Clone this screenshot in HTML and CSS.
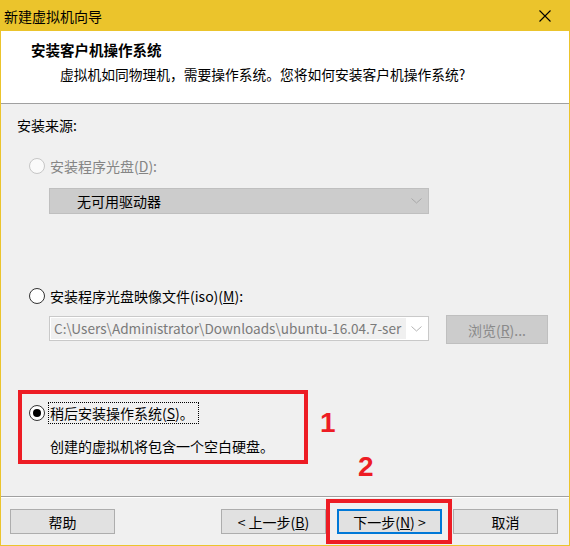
FILE: index.html
```html
<!DOCTYPE html>
<html lang="zh-CN">
<head>
<meta charset="utf-8">
<title>新建虚拟机向导</title>
<link rel="stylesheet" href="styles.css">
</head>
<body>
<div class="window">
  <div class="titlebar">
    <span class="title">新建虚拟机向导</span>
    <svg class="close" width="12" height="12" viewBox="0 0 12 12"><path d="M0.5 0.5 L11.5 11.5 M11.5 0.5 L0.5 11.5" stroke="#000" stroke-width="1.1" fill="none"/></svg>
  </div>
  <div class="header">
    <div class="h-title">安装客户机操作系统</div>
    <div class="h-sub">虚拟机如同物理机，需要操作系统。您将如何安装客户机操作系统?</div>
  </div>
  <div class="content">
    <div class="label">安装来源:</div>
    <div class="radio-row disabled r1">
      <span class="radio"></span>
      <span>安装程序光盘(<u>D</u>):</span>
    </div>
    <div class="select-disabled">
      <span>无可用驱动器</span>
      <svg class="chev" width="11" height="6" viewBox="0 0 11 6"><path d="M0.5 0.5 L5.5 5 L10.5 0.5" stroke="#a8a8a8" fill="none"/></svg>
    </div>
    <div class="radio-row r2">
      <span class="radio"></span>
      <span>安装程序光盘映像文件(iso)(<u>M</u>):</span>
    </div>
    <div class="iso-row">
      <div class="combo">
        <span class="combo-text">C:\Users\Administrator\Downloads\ubuntu-16.04.7-ser</span>
        <svg class="chev" width="11" height="6" viewBox="0 0 11 6"><path d="M0.5 0.5 L5.5 5 L10.5 0.5" stroke="#b4b4b4" fill="none"/></svg>
      </div>
      <div class="btn-disabled">浏览(<u>R</u>)...</div>
    </div>
    <div class="radio-row r3">
      <span class="radio checked"></span>
      <span class="focus">稍后安装操作系统(<u>S</u>)。</span>
    </div>
    <div class="desc">创建的虚拟机将包含一个空白硬盘。</div>
  </div>
  <div class="footer">
    <div class="btn">帮助</div>
    <div class="btn-group">
      <div class="btn">&lt; 上一步(<u>B</u>)</div>
      <div class="btn primary">下一步(<u>N</u>) &gt;</div>
      <div class="btn">取消</div>
    </div>
  </div>
  <div class="mark box1"></div>
  <div class="mark box2"></div>
  <div class="num n1">1</div>
  <div class="num n2">2</div>
</div>
</body>
</html>
```
FILE: styles.css
```css
* { box-sizing: border-box; }
html, body { margin: 0; padding: 0; }
body {
  font-family: "Noto Sans CJK SC", "Noto Sans", sans-serif;
  font-size: 14px;
  line-height: 20px;
  color: #000;
}
.window {
  position: relative;
  width: 570px;
  height: 546px;
  background: #ebc42c;
  padding: 0 1px 1px 1px;
  display: flex;
  flex-direction: column;
}
.titlebar {
  height: 31px;
  flex: none;
  display: flex;
  align-items: center;
  justify-content: space-between;
  padding: 0 18px 0 3px;
}
.title { font-size: 14px; }
.header {
  height: 73px;
  flex: none;
  background: #fff;
  border-bottom: 1px solid #a0a0a0;
  padding: 9px 0 0 30px;
}
.h-title { font-weight: bold; font-size: 14.5px; }
.h-sub { margin-top: 4px; padding-left: 29px; font-size: 13.75px; }
.content {
  height: 392px;
  flex: none;
  background: #f0f0f0;
  padding: 11px 0 0 16px;
}
.radio-row {
  display: flex;
  align-items: center;
  padding-left: 12px;
  height: 20px;
}
.radio {
  width: 16px;
  height: 16px;
  border: 1px solid #333;
  border-radius: 50%;
  background: #fff;
  margin-right: 5px;
  position: relative;
  flex: none;
}
.radio.checked::after {
  content: "";
  position: absolute;
  left: 3px;
  top: 3px;
  width: 8px;
  height: 8px;
  border-radius: 50%;
  background: #000;
}
.disabled { color: #858585; }
.disabled .radio { border-color: #c6c6c6; background: #fafafa; }
.r1 { margin-top: 21px; }
.select-disabled {
  margin: 12px 0 0 32px;
  width: 380px;
  height: 26px;
  background: #cccccc;
  border: 1px solid #bfbfbf;
  display: flex;
  align-items: center;
  justify-content: space-between;
  padding: 0 6px 0 27px;
}
.r2 { margin-top: 72px; }
.iso-row {
  display: flex;
  align-items: flex-start;
  margin: 10px 0 0 32px;
}
.combo {
  width: 380px;
  height: 25px;
  background: #fff;
  border: 1px solid #c9c9c9;
  display: flex;
  align-items: center;
  justify-content: space-between;
  padding: 1px 6px 1px 1px;
}
.combo-text {
  width: 355px;
  height: 21px;
  background: #f0f0f0;
  color: #7a7a7a;
  white-space: nowrap;
  overflow: hidden;
  padding-left: 3px;
  line-height: 21px;
  font-size: 13.6px;
}
.btn-disabled {
  margin: -1px 0 0 17px;
  width: 102px;
  height: 29px;
  background: #cccccc;
  border: 1px solid #bfbfbf;
  color: #8a8a8a;
  display: flex;
  align-items: center;
  justify-content: center;
}
.r3 { margin-top: 59px; }
.focus {
  outline: 1px dotted #000;
  padding: 0 4px 0 1px;
  margin-left: -1px;
}
.desc { margin: 13px 0 0 33px; }
.footer {
  flex: 1;
  background: #f0f0f0;
  border-top: 1px solid #a0a0a0;
  box-shadow: inset 0 1px 0 #fff;
  display: flex;
  align-items: flex-start;
  justify-content: space-between;
  padding: 12px 11px 0 9px;
}
.btn-group { display: flex; gap: 11px; }
.btn {
  width: 105px;
  height: 25px;
  background: #e1e1e1;
  border: 1px solid #adadad;
  display: flex;
  align-items: center;
  justify-content: center;
}
.btn.primary { border: 2px solid #0078d7; }
.mark {
  position: absolute;
  border: 4px solid #ed1c24;
}
.box1 { left: 18px; top: 390px; width: 290px; height: 74px; }
.box2 { left: 326px; top: 499px; width: 126px; height: 45px; }
.num {
  position: absolute;
  font-family: "Liberation Sans", Arial, sans-serif;
  font-weight: bold;
  font-size: 28px;
  line-height: 28px;
  color: #ed1c24;
}
.n1 { left: 320px; top: 409px; }
.n2 { left: 358px; top: 453px; }
```
